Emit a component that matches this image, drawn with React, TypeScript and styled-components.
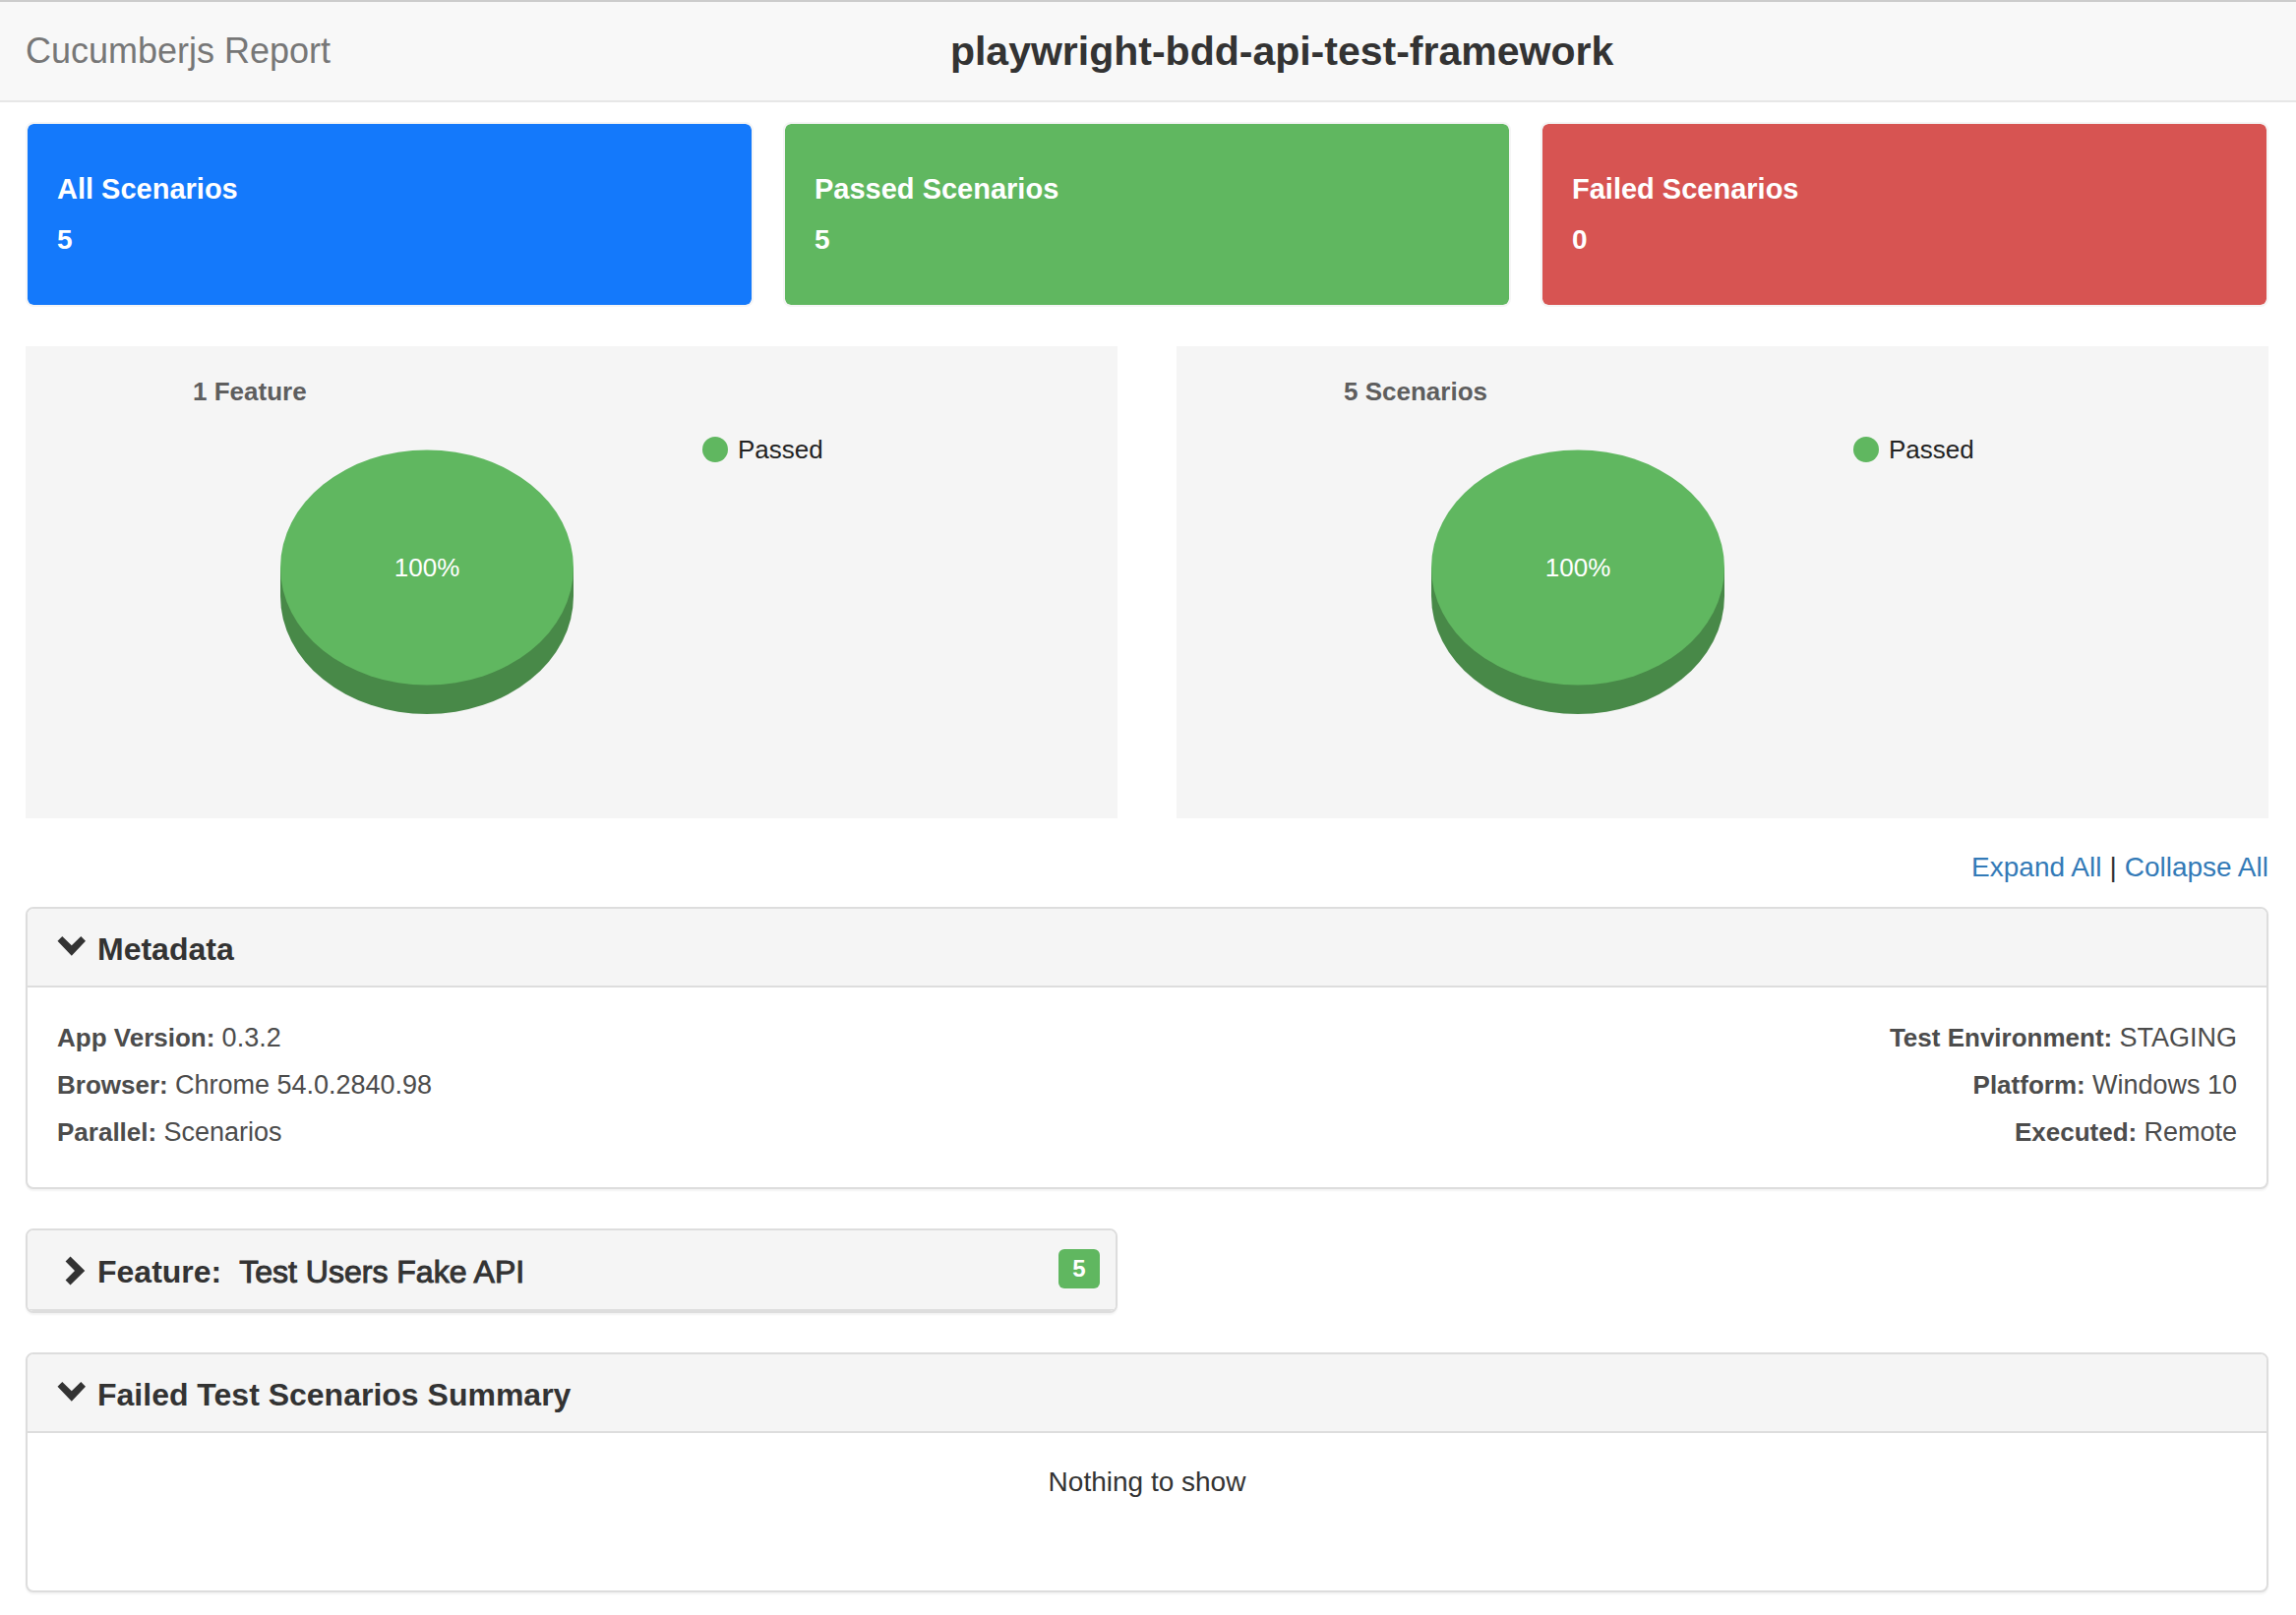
import React, { useState } from "react";
import styled, { createGlobalStyle } from "styled-components";

const GlobalStyle = createGlobalStyle`
  *, *::before, *::after { box-sizing: border-box; }
  body {
    margin: 0;
    background: #fff;
    color: #333;
    font-family: "Helvetica Neue", "Liberation Sans", Arial, sans-serif;
    font-size: 28px;
    line-height: 40px;
  }
`;

const Navbar = styled.header`
  display: flex;
  align-items: center;
  height: 104px;
  padding: 0 64px 0 26px;
  background: #f8f8f8;
  border-top: 2px solid #ccc;
  border-bottom: 2px solid #e7e7e7;
`;

const Brand = styled.span`
  color: #777;
  font-size: 36px;
`;

const ProjectName = styled.h1`
  flex: 1;
  margin: 0;
  text-align: center;
  font-size: 41px;
  font-weight: 700;
`;

const Page = styled.main`
  padding: 20px 28px 22px 26px;
`;

const Cards = styled.section`
  display: grid;
  grid-template-columns: repeat(3, 1fr);
  gap: 30px;
`;

const Card = styled.div<{ $color: string }>`
  height: 188px;
  padding: 40px 30px;
  border: 2px solid #f5f5f5;
  border-radius: 8px;
  background: ${(p) => p.$color};
  background-clip: padding-box;
  color: #fff;
  font-weight: 700;
  line-height: 52px;
`;

const CardTitle = styled.h2`
  margin: 0;
  font-size: 29px;
`;

const CardCount = styled.p`
  margin: 0;
`;

const Columns = styled.section`
  display: grid;
  grid-template-columns: 1fr 1fr;
  gap: 60px;
`;

const Charts = styled(Columns)`
  margin-top: 40px;
`;

const ChartPanel = styled.figure`
  height: 480px;
  margin: 0;
  padding: 26px 0;
  background: #f5f5f5;
  font-size: 26px;
`;

const ChartTitle = styled.figcaption`
  padding-left: 170px;
  color: #5e5e5e;
  font-weight: 700;
`;

const ChartBody = styled.div`
  display: flex;
  align-items: flex-start;
  gap: 131px;
  padding: 19px 0 0 259px;
`;

const Pie = styled.svg`
  flex: none;
  margin-top: 20px;
`;

const Legend = styled.div`
  display: flex;
  align-items: center;
  gap: 10px;
  color: #222;
`;

const LegendDot = styled.span`
  width: 26px;
  height: 26px;
  border-radius: 50%;
  background: #60b760;
`;

const Toggles = styled.nav`
  display: flex;
  justify-content: flex-end;
  gap: 8px;
  padding: 30px 0 20px;
`;

const ToggleLink = styled.a`
  color: #337ab7;
  text-decoration: none;
`;

const Stack = styled.div`
  display: grid;
  gap: 40px;
`;

const Panel = styled.section`
  border: 2px solid #ddd;
  border-radius: 8px;
  background: #fff;
  box-shadow: 0 2px 2px rgba(0, 0, 0, 0.05);
  overflow: hidden;
`;

const PanelToggle = styled.button<{ $tall?: boolean }>`
  display: flex;
  align-items: center;
  width: 100%;
  height: ${(p) => (p.$tall ? 82 : 80)}px;
  padding: 4px 16px 0 30px;
  border: 0;
  border-bottom: 2px solid #ddd;
  background: #f5f5f5;
  color: #333;
  font: inherit;
  font-size: 32px;
  text-align: left;
  cursor: pointer;
`;

const Icon = styled.svg`
  flex: none;
  width: 30px;
  height: 32px;
  margin-right: 11px;
  fill: currentColor;
`;

const FeatureName = styled.span`
  flex: 1;
  margin-left: 18px;
  -webkit-text-stroke: 1px currentColor;
`;

const Badge = styled.span`
  min-width: 42px;
  margin-bottom: 6px;
  border-radius: 6px;
  background: #60b760;
  color: #fff;
  font-size: 24px;
  font-weight: 700;
  text-align: center;
`;

const MetaBody = styled.div`
  display: flex;
  justify-content: space-between;
  padding: 27px 30px 32px;
  color: #4c4c4c;
  line-height: 48px;
`;

const MetaList = styled.dl<{ $align: "left" | "right" }>`
  margin: 0;
  text-align: ${(p) => p.$align};
`;

const MetaRow = styled.div`
  font-size: 26px;
`;

const MetaName = styled.dt`
  display: inline;
  font-weight: 700;
`;

const MetaValue = styled.dd`
  display: inline;
  margin: 0;
  font-size: 27px;
`;

const EmptyBody = styled.p`
  height: 160px;
  margin: 0;
  padding: 30px;
  text-align: center;
`;

function Chevron({ open }: { open: boolean }) {
  return (
    <Icon viewBox="0 0 30 32" aria-hidden="true">
      {open ? (
        <path d="M5.3 3 L14.8 12.3 L24.3 3 L29 7.7 L14.8 22.7 L0.5 7.7 Z" />
      ) : (
        <path d="M13.5 0.5 L28.3 15 L13.5 29.5 L8.6 24.6 L18 15 L8.6 5.4 Z" />
      )}
    </Icon>
  );
}

function PieChart({ title }: { title: string }) {
  return (
    <ChartPanel>
      <ChartTitle>{title}</ChartTitle>
      <ChartBody>
        <Pie width="298" height="270" viewBox="0 0 298 270">
          <path d="M0 120 V149 A149 120 0 0 0 298 149 V120 Z" fill="#488948" />
          <ellipse cx="149" cy="120" rx="149" ry="119.5" fill="#60b760" />
          <text x="149" y="129" textAnchor="middle" fill="#fff" fontSize="26">
            100%
          </text>
        </Pie>
        <Legend>
          <LegendDot />
          Passed
        </Legend>
      </ChartBody>
    </ChartPanel>
  );
}

function MetaRows({ rows, align }: { rows: string[][]; align: "left" | "right" }) {
  return (
    <MetaList $align={align}>
      {rows.map(([name, value]) => (
        <MetaRow key={name}>
          <MetaName>{name}:</MetaName> <MetaValue>{value}</MetaValue>
        </MetaRow>
      ))}
    </MetaList>
  );
}

const cards = [
  { title: "All Scenarios", count: 5, color: "#1479fb" },
  { title: "Passed Scenarios", count: 5, color: "#60b760" },
  { title: "Failed Scenarios", count: 0, color: "#d75452" },
];

const leftMeta = [
  ["App Version", "0.3.2"],
  ["Browser", "Chrome 54.0.2840.98"],
  ["Parallel", "Scenarios"],
];

const rightMeta = [
  ["Test Environment", "STAGING"],
  ["Platform", "Windows 10"],
  ["Executed", "Remote"],
];

export default function App() {
  const [open, setOpen] = useState({ meta: true, feature: false, failed: true });
  const setAll = (value: boolean) => (e: React.MouseEvent) => {
    e.preventDefault();
    setOpen({ meta: value, feature: value, failed: value });
  };
  const toggle = (key: keyof typeof open) => () =>
    setOpen((state) => ({ ...state, [key]: !state[key] }));

  return (
    <>
      <GlobalStyle />
      <Navbar>
        <Brand>Cucumberjs Report</Brand>
        <ProjectName>playwright-bdd-api-test-framework</ProjectName>
      </Navbar>
      <Page>
        <Cards>
          {cards.map((card) => (
            <Card key={card.title} $color={card.color}>
              <CardTitle>{card.title}</CardTitle>
              <CardCount>{card.count}</CardCount>
            </Card>
          ))}
        </Cards>
        <Charts>
          <PieChart title="1 Feature" />
          <PieChart title="5 Scenarios" />
        </Charts>
        <Toggles>
          <ToggleLink href="#expand" onClick={setAll(true)}>Expand All</ToggleLink>
          <span>|</span>
          <ToggleLink href="#collapse" onClick={setAll(false)}>Collapse All</ToggleLink>
        </Toggles>
        <Stack>
          <Panel>
            <PanelToggle aria-expanded={open.meta} onClick={toggle("meta")}>
              <Chevron open={open.meta} />
              <strong>Metadata</strong>
            </PanelToggle>
            {open.meta && (
              <MetaBody>
                <MetaRows rows={leftMeta} align="left" />
                <MetaRows rows={rightMeta} align="right" />
              </MetaBody>
            )}
          </Panel>
          <Columns>
            <Panel>
              <PanelToggle $tall aria-expanded={open.feature} onClick={toggle("feature")}>
                <Chevron open={open.feature} />
                <strong>Feature:</strong>
                <FeatureName>Test Users Fake API</FeatureName>
                <Badge>5</Badge>
              </PanelToggle>
            </Panel>
          </Columns>
          <Panel>
            <PanelToggle aria-expanded={open.failed} onClick={toggle("failed")}>
              <Chevron open={open.failed} />
              <strong>Failed Test Scenarios Summary</strong>
            </PanelToggle>
            {open.failed && <EmptyBody>Nothing to show</EmptyBody>}
          </Panel>
        </Stack>
      </Page>
    </>
  );
}
